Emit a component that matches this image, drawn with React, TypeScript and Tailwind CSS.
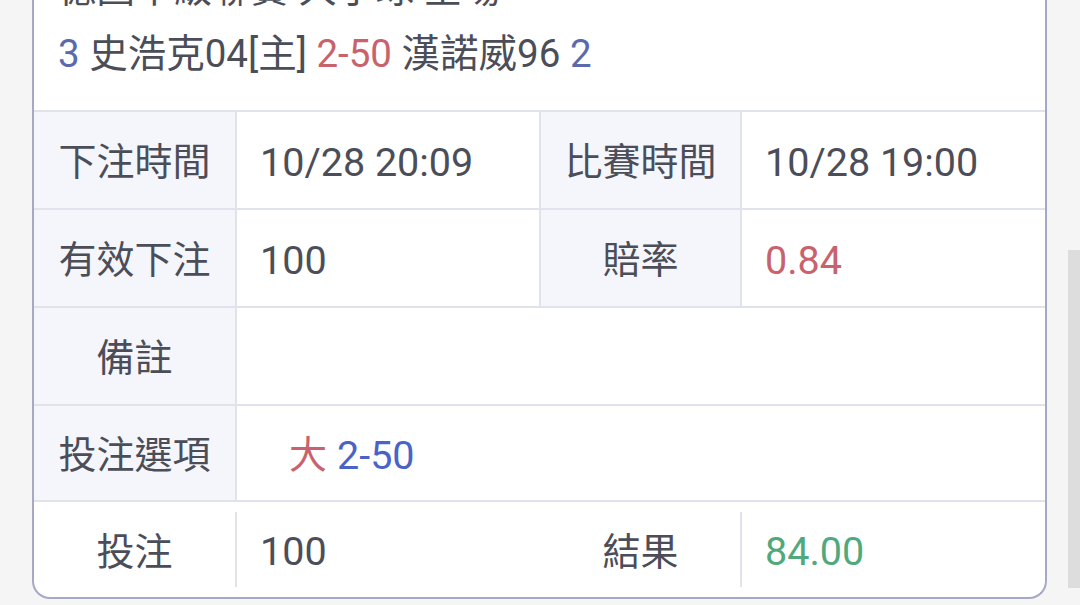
import React from "react"

const labelCell = "flex items-center justify-center bg-[#f5f6fb] border-r-2 border-[#e0e2ec] pt-[5px]"
const valueCell = "flex items-center pl-[23px] pt-[5px] text-[39.5px]"

export default function App() {
  return (
    <div className="relative h-[605px] w-full overflow-hidden bg-[#f5f5f6] font-['Roboto','Noto_Sans_CJK_TC',sans-serif] text-[#4b4e58]">
      <div className="ml-[32px] mt-[-42px] w-[1015px] rounded-b-[18px] border-x-2 border-b-2 border-[#a6a8c6] bg-white">
        {/* match header */}
        <div className="pl-[24px] pb-[26px] text-[38.5px] leading-[61px]">
          <div>德國甲級聯賽 大小球 全場</div>
          <div className="mt-[4px] whitespace-nowrap">
            <span className="text-[#5a6aad]">3</span> 史浩克04[主] <span className="text-[#c8626c]">2-50</span> 漢諾威96{" "}
            <span className="text-[#5a6aad]">2</span>
          </div>
        </div>

        {/* detail table */}
        <div className="text-[38px]">
          <div className="flex h-[98px] border-t-2 border-[#e0e2ec]">
            <div className={`${labelCell} w-[203px]`}>下注時間</div>
            <div className={`${valueCell} w-[304px] border-r-2 border-[#e0e2ec]`}>10/28 20:09</div>
            <div className={`${labelCell} w-[201px]`}>比賽時間</div>
            <div className={`${valueCell} flex-1`}>10/28 19:00</div>
          </div>
          <div className="flex h-[98px] border-t-2 border-[#e0e2ec]">
            <div className={`${labelCell} w-[203px]`}>有效下注</div>
            <div className={`${valueCell} w-[304px] border-r-2 border-[#e0e2ec]`}>100</div>
            <div className={`${labelCell} w-[201px]`}>賠率</div>
            <div className={`${valueCell} flex-1 text-[#c8626c]`}>0.84</div>
          </div>
          <div className="flex h-[98px] border-t-2 border-[#e0e2ec]">
            <div className={`${labelCell} w-[203px]`}>備註</div>
            <div className={`${valueCell} flex-1`}></div>
          </div>
          <div className="flex h-[96px] border-t-2 border-[#e0e2ec]">
            <div className={`${labelCell} w-[203px]`}>投注選項</div>
            <div className="flex flex-1 items-center pl-[52px] pt-[5px] text-[39.5px]">
              <span className="text-[38px] text-[#c8626c]">大</span>
              <span className="ml-[10px] text-[#4a63c7]">2-50</span>
            </div>
          </div>
          <div className="flex h-[97px] border-t-2 border-[#e0e2ec] py-[10px]">
            <div className="flex w-[203px] items-center justify-center border-r-2 border-[#e0e2ec] pt-[5px]">投注</div>
            <div className={`${valueCell} w-[304px]`}>100</div>
            <div className="flex w-[201px] items-center justify-center border-r-2 border-[#e0e2ec] pt-[5px]">結果</div>
            <div className={`${valueCell} flex-1 text-[#4fa97c]`}>84.00</div>
          </div>
        </div>
      </div>

      {/* scroll indicator */}
      <div className="absolute right-0 top-[250px] h-[338px] w-[12px] bg-[#dddddd]" />
    </div>
  )
}
